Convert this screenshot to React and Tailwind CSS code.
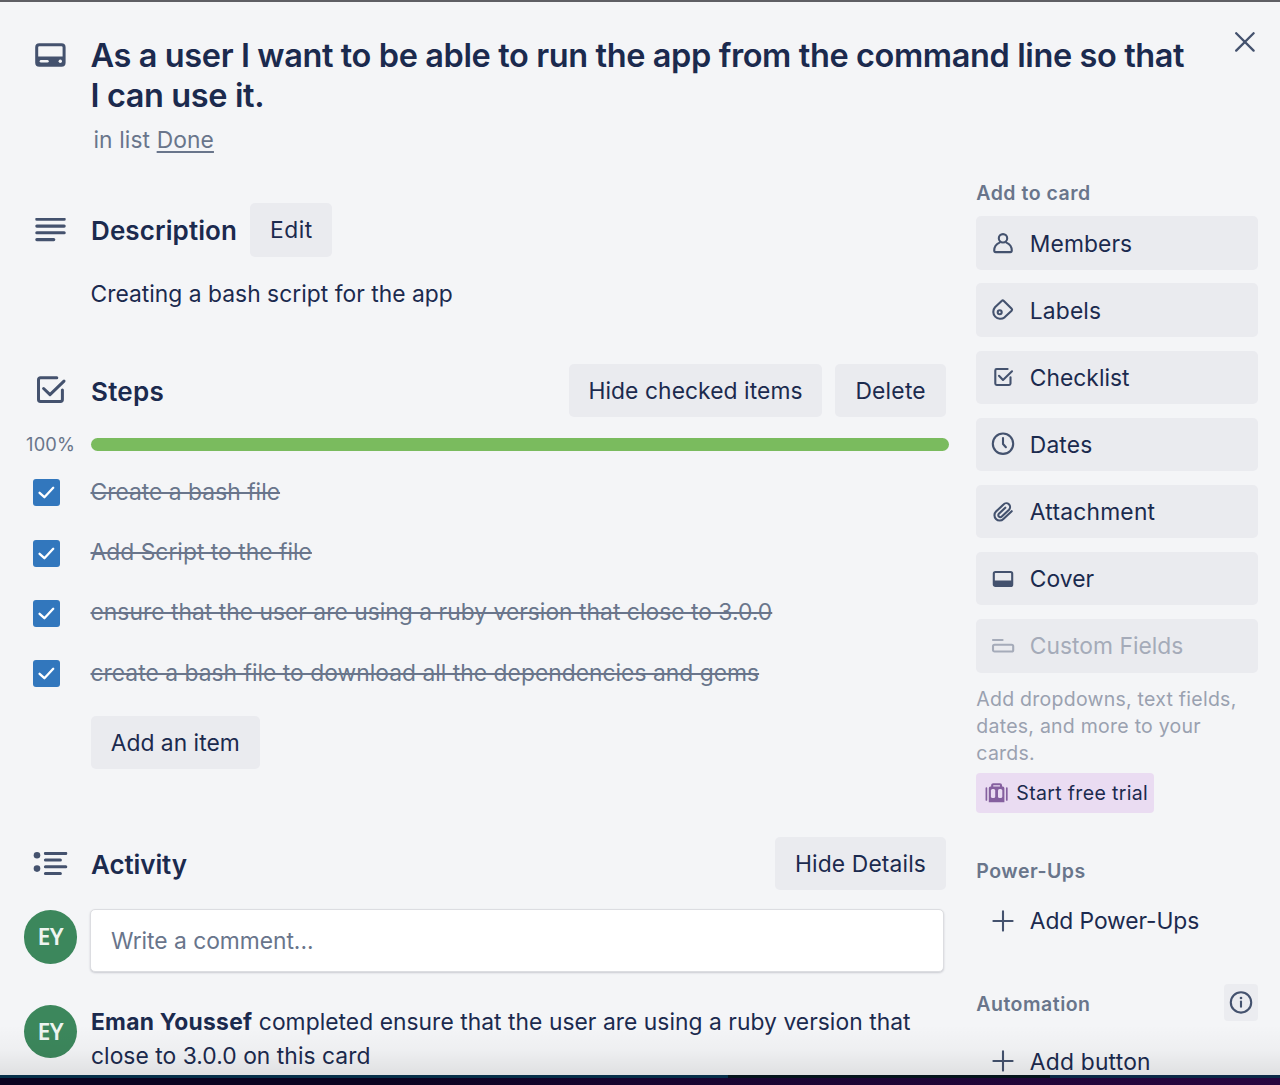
import React from "react";

const INK = "#44526e";

function Svg({ w, h, className = "", children, stroke = INK, sw = 2.1 }) {
  return (
    <svg
      width={w}
      height={h}
      viewBox={`0 0 ${w} ${h}`}
      fill="none"
      stroke={stroke}
      strokeWidth={sw}
      strokeLinecap="round"
      strokeLinejoin="round"
      className={`shrink-0 ${className}`}
    >
      {children}
    </svg>
  );
}

const sideIcons = {
  members: (
    <>
      <circle cx="14" cy="9.3" r="4.2" />
      <path d="M10.6 13.6C7.2 15 5.2 18 5.2 21.6c0 .9.6 1.5 1.5 1.5h14.6c.9 0 1.5-.6 1.5-1.5 0-3.6-2-6.6-5.4-8" />
    </>
  ),
  labels: (
    <>
      <path d="M12.9 4.7 6 11.2a7 7 0 0 0 9.6 10.1l7-6.6c.7-.7.7-1.2.1-1.9L14.6 4.7c-.6-.6-1.1-.6-1.7 0z" />
      <circle cx="10.7" cy="16.2" r="2" />
    </>
  ),
  checklist: (
    <>
      <path d="M18.6 6H7.7c-.8 0-1.4.6-1.4 1.4v13.2c0 .8.6 1.4 1.4 1.4h12.4c.8 0 1.4-.6 1.4-1.4v-6.4" />
      <path d="m10 12.8 4 4.2 9-8.7" />
    </>
  ),
  dates: (
    <>
      <circle cx="14" cy="13.7" r="10.2" />
      <path d="M14 8v6l2.9 3.2" />
    </>
  ),
  attachment: (
    <path d="m22.7 13.2-8.3 7.8a5.2 5.2 0 0 1-7.4-7.4l7.5-7.2a3.8 3.8 0 0 1 5.5 5.3l-7.2 6.9a2 2 0 0 1-2.9-2.9l6.4-6" />
  ),
  cover: (
    <>
      <rect x="4.8" y="7" width="18.4" height="14" rx="1.6" />
      <path d="M5 15.5h18v4.6a1 1 0 0 1-1 1H6a1 1 0 0 1-1-1z" fill={INK} stroke="none" />
    </>
  ),
  fields: (
    <>
      <path d="M4 8h9.6" />
      <rect x="4" y="12.7" width="20.2" height="6.8" rx="1.6" />
    </>
  ),
  plus: <path d="M14 4.4v19.2M4.4 14h19.2" />,
};

function SideButton({ icon, label, tracking = "", plain = false, disabled = false }) {
  return (
    <button
      className={`flex h-[53.6px] w-[281.5px] shrink-0 items-center gap-[13px] rounded-[5px] pl-[12.5px] text-left ${
        plain ? "" : "bg-[#eaebef]"
      } ${disabled ? "text-[#a5abb9]" : "text-[#1b2a4e]"}`}
    >
      <Svg w={28} h={28} stroke={disabled ? "#a5abb9" : INK}>
        {sideIcons[icon]}
      </Svg>
      <span className={`whitespace-nowrap pt-[1px] ${tracking}`}>{label}</span>
    </button>
  );
}

function Button({ children, className = "" }) {
  return (
    <button
      className={`flex h-[53.6px] shrink-0 items-center justify-center whitespace-nowrap rounded-[5px] bg-[#eaebef] text-[#1b2a4e] ${className}`}
    >
      {children}
    </button>
  );
}

function Avatar() {
  return (
    <div className="ml-[23.5px] flex size-[53.6px] shrink-0 items-center justify-center rounded-full bg-[#3c875c] font-['Noto_Sans',sans-serif] text-[23px] font-semibold tracking-[-0.6px] text-[#eef5f0]">
      EY
    </div>
  );
}

function SideHeading({ children }) {
  return (
    <h3 className="h-[27px] pt-[1px] text-[19.5px] font-semibold leading-[27px] tracking-[0.5px] text-[#69758b]">
      {children}
    </h3>
  );
}

const steps = [
  "Create a bash file",
  "Add Script to the file",
  "ensure that the user are using a ruby version that close to 3.0.0",
  "create a bash file to download all the dependencies and gems",
];

export default function App() {
  return (
    <div className="relative flex h-[1085px] w-[1280px] flex-col overflow-hidden bg-[#f4f5f7] font-[Inter,sans-serif] text-[22.8px] leading-[33.6px] tracking-[0.03px] text-[#1b2a4e]">
      <div className="h-[2px] shrink-0 bg-[#5f5f64]" />

      <header className="flex h-[174px] shrink-0 items-start">
        <div className="w-[90.5px] shrink-0 pl-[35px] pt-[40.5px]">
          <Svg w={31} h={24} sw={3}>
            <rect x="1.7" y="1.7" width="27.4" height="20.6" rx="2.6" />
            <path d="M2 13.4h27v7.6a1.5 1.5 0 0 1-1.5 1.5h-24A1.5 1.5 0 0 1 2 21z" fill={INK} stroke="none" />
            <path d="M6 18.2h6.4" stroke="#f4f5f7" strokeWidth="2.6" />
            <circle cx="25.3" cy="18.2" r="1.7" fill="#f4f5f7" stroke="none" />
          </Svg>
        </div>
        <div className="w-[1144.5px] shrink-0 pt-[34px]">
          <h1 className="text-[32.5px] font-semibold leading-[40.4px] tracking-[-0.39px]">
            As a user I want to be able to run the app from the command line so that
            <br />I can use it.
          </h1>
          <p className="pl-[3px] pt-[6.5px] tracking-[0.1px] text-[#69758b]">
            in list <span className="underline decoration-[1.5px] underline-offset-[3px]">Done</span>
          </p>
        </div>
        <button className="pt-[30px]">
          <Svg w={20} h={20} sw={2.3}>
            <path d="m1.2 1.2 17.4 17.4M18.6 1.2 1.2 18.6" />
          </Svg>
        </button>
      </header>

      <div className="flex min-h-0 flex-1">
        <main className="flex w-[976.3px] shrink-0 flex-col">
          <section className="mt-[27px] flex h-[53.6px] shrink-0 items-center">
            <div className="w-[91px] shrink-0 pl-[35px]">
              <Svg w={32} h={24} sw={3.1}>
                <path d="M1.8 1.3h27.4M1.8 8.1h27.4M1.8 14.8h27.4M1.8 21.6h17" />
              </Svg>
            </div>
            <h2 className="w-[159.3px] pt-[2px] text-[26px] font-semibold tracking-[0.1px]">Description</h2>
            <Button className="w-[82px] tracking-[0.5px]">Edit</Button>
          </section>
          <p className="mt-[20px] shrink-0 pl-[90.5px]">Creating a bash script for the app</p>

          <section className="mt-[53.5px] flex h-[53.6px] shrink-0 items-center">
            <div className="w-[91px] shrink-0 pl-[36px]">
              <Svg w={31} h={30} sw={3}>
                <path d="M20.8 2.8H4.4c-1.1 0-1.9.8-1.9 1.9v19.9c0 1.1.8 1.9 1.9 1.9h20.1c1.1 0 1.9-.8 1.9-1.9v-9.6" />
                <path d="m7.6 13.5 6.4 6.2L28 6.1" />
              </Svg>
            </div>
            <h2 className="w-[478px] pt-[2px] text-[26px] font-semibold tracking-[0.25px]">Steps</h2>
            <Button className="w-[253px] tracking-[0.08px]">Hide checked items</Button>
            <Button className="ml-[13.3px] w-[110.7px] tracking-[0.24px]">Delete</Button>
          </section>

          <div className="mt-[20px] flex h-[14px] shrink-0 items-center">
            <span className="w-[90.7px] shrink-0 pl-[26px] pt-[2px] text-[18.3px] tracking-[0.2px] text-[#69758b]">
              100%
            </span>
            <div className="h-[13.4px] w-[858.5px] rounded-full bg-[#7abb5e]" />
          </div>

          <ul className="mt-[10px] shrink-0">
            {steps.map((s) => (
              <li key={s} className="flex h-[60.4px] items-center">
                <div className="w-[90.5px] shrink-0 pl-[33.3px] pt-[2.6px]">
                  <div className="flex size-[27px] items-center justify-center rounded-[3px] bg-[#3277bd]">
                    <Svg w={17} h={13} stroke="#ffffff" sw={2.3}>
                      <path d="m1.6 6.8 4.8 4.4 8.8-9.4" />
                    </Svg>
                  </div>
                </div>
                <span className="whitespace-nowrap text-[#69758b] line-through decoration-[1.6px]">{s}</span>
              </li>
            ))}
          </ul>
          <Button className="ml-[90.7px] mt-[13px] w-[169px]">Add an item</Button>

          <section className="mt-[67.3px] flex h-[53.6px] shrink-0 items-center">
            <div className="w-[91px] shrink-0 pl-[33px]">
              <Svg w={36} h={24} sw={3}>
                <path d="M12.4 1.4h20.4M12.4 8.1h15M12.4 14.8h20.4M12.4 21.5h15" />
                <circle cx="4" cy="3.3" r="3.3" fill={INK} stroke="none" />
                <circle cx="4" cy="16.6" r="3.3" fill={INK} stroke="none" />
              </Svg>
            </div>
            <h2 className="w-[684px] pt-[2px] text-[26px] font-semibold tracking-[-0.1px]">Activity</h2>
            <Button className="w-[171px] tracking-[0.15px]">Hide Details</Button>
          </section>

          <div className="mt-[19px] flex h-[62.5px] shrink-0 items-start">
            <div className="pt-[1px]">
              <Avatar />
            </div>
            <div className="ml-[12.9px] flex h-[62.4px] w-[854px] items-center rounded-[5px] border border-[#dcdde1] bg-white pl-[20px] tracking-[-0.02px] text-[#69758b] shadow-[0_1px_2px_#c9cbd1]">
              Write a comment...
            </div>
          </div>

          <div className="mt-[32.8px] flex shrink-0 items-start">
            <Avatar />
            <p className="ml-[13.9px] w-[850px] whitespace-nowrap pt-[0.4px] tracking-[0.05px]">
              <span className="font-bold tracking-[0.28px]">Eman Youssef</span> completed ensure that the user are using a
              ruby version that
              <br />
              close to 3.0.0 on this card
            </p>
          </div>
        </main>

        <aside className="flex w-[281.5px] shrink-0 flex-col items-start pt-[3px]">
          <SideHeading>Add to card</SideHeading>
          <div className="mt-[10.4px] flex flex-col gap-[13.5px]">
            <SideButton icon="members" label="Members" tracking="tracking-[0.1px]" />
            <SideButton icon="labels" label="Labels" tracking="tracking-[0.15px]" />
            <SideButton icon="checklist" label="Checklist" />
            <SideButton icon="dates" label="Dates" tracking="tracking-[0.15px]" />
            <SideButton icon="attachment" label="Attachment" tracking="tracking-[0.22px]" />
            <SideButton icon="cover" label="Cover" />
            <SideButton icon="fields" label="Custom Fields" disabled />
          </div>
          <p className="mt-[13.6px] whitespace-nowrap text-[19.5px] leading-[26.9px] tracking-[0.25px] text-[#9aa1b0]">
            Add dropdowns, text fields,
            <br />
            dates, and more to your
            <br />
            cards.
          </p>
          <button className="mt-[5.9px] flex h-[40px] w-[178px] shrink-0 items-center rounded-[4px] bg-[#eadcf2] pl-[8.5px] text-[19.5px] tracking-[0.34px]">
            <Svg w={24} h={20} stroke="#85609f">
              <path d="M1.4 5v12M21.8 5v12" strokeWidth="1.7" />
              <path d="M7.2 4V2.2a1 1 0 0 1 1-1h6.8a1 1 0 0 1 1 1V4" />
              <path d="M5.4 3.6h12.4a1.6 1.6 0 0 1 1.6 1.6v14H3.8v-14a1.6 1.6 0 0 1 1.6-1.6z" fill="#85609f" stroke="none" />
              <rect x="5.9" y="6" width="4.3" height="9" rx="1.6" fill="#eadcf2" stroke="none" />
              <rect x="13" y="6" width="4.3" height="9" rx="1.6" fill="#eadcf2" stroke="none" />
            </Svg>
            <span className="ml-[7.5px] whitespace-nowrap pt-[1.5px]">Start free trial</span>
          </button>

          <div className="mt-[43.8px]">
            <SideHeading>Power-Ups</SideHeading>
          </div>
          <div className="mt-[10.2px]">
            <SideButton plain icon="plus" label="Add Power-Ups" tracking="tracking-[-0.08px]" />
          </div>

          <div className="mt-[36.6px] flex h-[37px] w-full shrink-0 items-center justify-between">
            <div className="pt-[3px]">
              <SideHeading>Automation</SideHeading>
            </div>
            <div className="flex h-[37px] w-[33.5px] items-center justify-center rounded-[4px] bg-[#ebecf0]">
              <Svg w={24} h={24}>
                <circle cx="12" cy="12.4" r="10.2" />
                <path d="M12 11.6v5.2" />
                <circle cx="12" cy="8" r="1.3" fill={INK} stroke="none" />
              </Svg>
            </div>
          </div>
          <div className="mt-[13.5px]">
            <SideButton plain icon="plus" label="Add button" tracking="tracking-[0.22px]" />
          </div>
        </aside>
      </div>

      <div className="pointer-events-none absolute inset-x-0 bottom-0 flex flex-col">
        <div className="h-[50px] bg-linear-to-b from-black/0 via-black/[0.025] to-black/[0.085]" />
        <div className="flex h-[3px]">
          <div className="w-[728px] bg-[#06304a]" />
          <div className="w-[322px] bg-[#04141c]" />
          <div className="flex-1 bg-[#0b2a48]" />
        </div>
        <div className="h-[7px] bg-linear-to-r from-[#0a0320] from-30% via-[#16042f] via-50% to-[#27053f]" />
      </div>
    </div>
  );
}
